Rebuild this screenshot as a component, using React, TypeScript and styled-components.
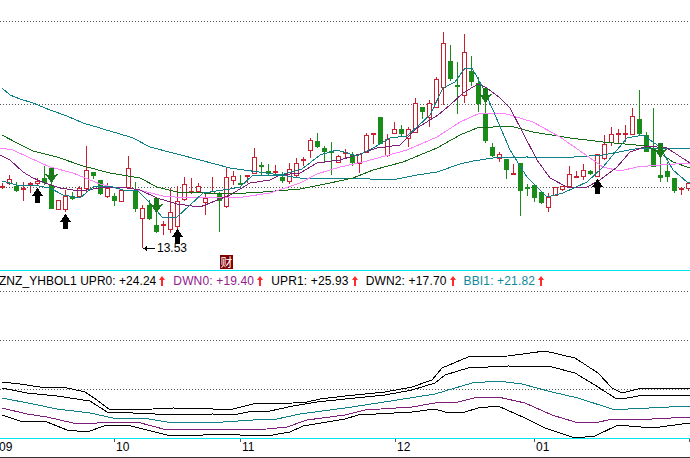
import React from "react";
import styled, { createGlobalStyle } from "styled-components";

type Candle = [number, number, number, number, number];

// wick top, body top, body bottom, wick bottom, kind (0 hollow red, 1 green, 2 solid red)
const candles: Candle[] = [
  [183, 186, 187, 189, 2], [175, 179, 183, 185, 0], [182, 186, 191, 192, 1], [182, 188, 189, 201, 2],
  [182, 183, 185, 193, 2], [178, 181, 183, 185, 0], [166, 178, 183, 185, 1], [178, 185, 209, 209, 1],
  [200, 200, 209, 209, 0], [190, 196, 209, 212, 0], [192, 196, 199, 200, 1], [186, 188, 196, 198, 0],
  [146, 170, 188, 192, 0], [172, 172, 176, 179, 1], [180, 180, 194, 195, 1], [183, 188, 196, 198, 0],
  [193, 196, 201, 206, 1], [190, 190, 201, 201, 0], [156, 168, 187, 188, 0], [182, 190, 209, 212, 1],
  [205, 208, 218, 248, 0], [200, 205, 219, 220, 1], [200, 225, 232, 233, 1], [221, 224, 225, 235, 2],
  [188, 212, 229, 233, 0], [186, 201, 226, 230, 0], [177, 184, 199, 201, 0], [178, 191, 192, 194, 2],
  [183, 186, 191, 193, 0], [193, 198, 202, 215, 0], [177, 191, 193, 194, 0], [192, 193, 201, 232, 1],
  [168, 177, 206, 208, 0], [171, 176, 180, 185, 0], [175, 183, 184, 185, 1], [175, 175, 176, 183, 2],
  [148, 157, 173, 174, 0], [162, 165, 166, 175, 1], [164, 171, 174, 175, 1], [165, 171, 172, 175, 2],
  [172, 177, 181, 183, 1], [163, 169, 181, 184, 0], [158, 163, 175, 177, 0], [157, 159, 160, 166, 2],
  [138, 140, 150, 158, 0], [133, 141, 147, 148, 1], [146, 148, 152, 162, 1], [142, 151, 153, 175, 1],
  [155, 156, 162, 163, 0], [149, 152, 153, 158, 2], [152, 155, 163, 166, 1], [154, 154, 163, 173, 0],
  [133, 135, 152, 153, 0], [133, 133, 135, 144, 2], [117, 117, 144, 144, 1], [134, 139, 155, 157, 0],
  [122, 129, 133, 133, 0], [125, 129, 134, 137, 1], [127, 129, 138, 147, 0], [98, 103, 132, 133, 0],
  [107, 107, 112, 119, 1], [100, 103, 117, 127, 0], [77, 79, 107, 108, 0], [32, 43, 87, 105, 0],
  [45, 61, 79, 81, 1], [62, 85, 86, 114, 1], [34, 52, 95, 103, 0], [56, 71, 82, 86, 1],
  [77, 83, 104, 112, 1], [88, 113, 141, 143, 1], [143, 147, 156, 157, 1], [152, 154, 158, 162, 0],
  [159, 159, 170, 179, 1], [164, 173, 174, 174, 2], [163, 163, 191, 216, 1], [184, 187, 189, 196, 1],
  [185, 185, 198, 202, 1], [192, 192, 203, 204, 1], [193, 197, 207, 212, 0], [187, 187, 195, 195, 0],
  [186, 186, 189, 191, 0], [166, 174, 186, 188, 0], [171, 176, 178, 178, 2], [164, 170, 176, 180, 0],
  [170, 171, 174, 175, 1], [154, 154, 176, 177, 0], [135, 144, 158, 160, 0], [127, 134, 142, 146, 0],
  [129, 133, 134, 143, 2], [125, 133, 134, 142, 2], [108, 116, 134, 135, 0], [90, 119, 134, 135, 1],
  [132, 135, 152, 152, 1], [108, 149, 167, 167, 1], [143, 175, 178, 182, 1], [162, 171, 177, 182, 1],
  [178, 178, 191, 193, 1], [187, 188, 189, 195, 2], [182, 183, 188, 191, 0],
];

const priceLines = [
  {
    color: "#0e8088",
    points:
      "2,88 10,95 20,99 33,103 50,110 67,116 83,123 100,128 106,130 117,133 133,138 150,147 200,160 230,168 280,175 300,178 347,178 370,179 397,179 417,175 437,172 460,164 473,161 493,158 527,157 560,158 603,155 640,148 690,148",
  },
  {
    color: "#156b15",
    points:
      "2,135 17,143 33,151 57,157 83,166 110,173 140,178 157,187 177,192 230,194 263,192 300,189 330,183 353,178 373,170 403,162 437,148 460,135 477,128 510,126 533,132 570,138 603,142 647,146 660,153 673,162 690,168",
  },
  {
    color: "#ff80ff",
    points:
      "0,148 13,150 30,158 50,167 73,173 100,184 123,190 143,191 163,196 187,198 213,197 230,198 243,197 270,193 300,183 317,174 340,167 363,162 407,150 437,137 460,122 480,113 503,113 533,122 560,137 583,153 603,167 620,171 637,167 660,165 690,163",
  },
  {
    color: "#7d1e78",
    points:
      "0,155 10,160 23,172 33,178 45,183 60,188 80,191 107,187 127,188 140,190 157,198 177,204 200,207 230,195 250,183 270,180 280,175 300,173 317,163 340,160 363,153 377,148 400,145 417,128 438,115 450,105 463,93 478,84 487,88 500,98 510,108 523,133 537,160 550,178 567,187 587,187 600,180 617,167 630,152 647,146 667,148 690,163",
  },
  {
    color: "#0e8088",
    points:
      "2,181 17,185 33,185 50,188 63,195 80,198 93,187 110,186 123,190 137,190 150,203 163,218 177,217 190,205 203,193 230,189 240,187 253,175 280,175 302,169 320,155 337,150 357,156 373,148 390,138 407,136 430,115 443,88 455,82 465,68 472,68 483,88 493,110 510,150 527,177 547,197 563,193 587,182 603,167 627,138 643,135 660,147 673,170 687,182 690,183",
  },
];

const bandLines = [
  {
    color: "#000000",
    points:
      "2,382 20,384 40,387 63,387 85,392 97,400 110,410 153,409 173,408 213,409 233,409 253,404 293,403 307,402 320,399 345,396 385,392 412,387 432,380 442,368 468,357 508,356 545,351 575,358 598,373 612,388 622,393 638,389 690,388",
  },
  {
    color: "#000000",
    points:
      "2,388 27,393 57,396 90,401 107,412 133,413 177,415 213,414 233,415 253,411 270,411 293,406 317,402 345,399 385,395 412,390 435,383 445,375 468,368 508,366 552,367 575,373 598,387 615,398 622,399 638,396 690,395",
  },
  {
    color: "#0e8088",
    points:
      "2,398 33,404 57,409 90,413 113,418 143,418 167,422 200,422 223,422 253,420 277,419 300,414 345,408 378,403 435,394 472,383 498,381 522,384 552,392 578,398 612,409 628,409 690,406",
  },
  {
    color: "#7d1e78",
    points:
      "2,408 27,414 47,417 73,423 87,424 107,422 137,422 167,430 267,429 287,427 307,420 345,415 365,410 412,407 435,403 458,402 478,397 498,397 525,403 552,415 575,422 595,423 612,419 652,419 690,417",
  },
  {
    color: "#000000",
    points:
      "2,415 20,421 47,422 67,430 87,432 107,425 127,425 167,435 193,436 213,434 267,436 290,432 303,426 345,419 358,415 412,412 435,409 445,412 465,412 478,408 498,406 525,418 545,428 575,438 595,436 618,425 652,428 690,423",
  },
];

const buySignals = [
  { x: 37, y: 188 },
  { x: 65, y: 214 },
  { x: 177, y: 229 },
  { x: 597, y: 179 },
];

const sellSignals = [
  { x: 51, y: 168 },
  { x: 156, y: 198 },
  { x: 485, y: 88 },
  { x: 660, y: 143 },
];

const legendItems = [
  { label: "ZNZ_YHBOL1 UPR0: +24.24", color: "#000000", spacing: 0.04 },
  { label: "DWN0: +19.40", color: "#93208d", spacing: 0.15 },
  { label: "UPR1: +25.93", color: "#000000", spacing: 0.15 },
  { label: "DWN2: +17.70", color: "#000000", spacing: 0.15 },
  { label: "BBI1: +21.82", color: "#10879a", spacing: 0.15 },
];

const axisMarks = [
  { label: "09", x: -3 },
  { label: "10", x: 114 },
  { label: "11", x: 240 },
  { label: "12", x: 395 },
  { label: "01", x: 534 },
  { label: "02", x: 689 },
];

const RED = "#c8202f";
const GREEN = "#1a8c1a";

const GlobalStyle = createGlobalStyle`
  html, body {
    margin: 0;
    padding: 0;
    background: #ffffff;
  }
`;

const Page = styled.div`
  width: 690px;
  height: 458px;
  overflow: hidden;
  display: flex;
  flex-direction: column;
  background: #ffffff;
  font-family: "Liberation Sans", Arial, sans-serif;
  font-size: 12px;
  color: #000000;
`;

const PricePane = styled.div`
  position: relative;
  height: 270px;
  flex: none;
`;

const PaneSvg = styled.svg`
  display: block;
  flex: none;
`;

const GridLine = styled.line`
  stroke: #555555;
  stroke-width: 1;
  stroke-dasharray: 1 2;
`;

const Trace = styled.polyline<{ $color: string }>`
  fill: none;
  stroke: ${({ $color }) => $color};
  stroke-width: 1;
`;

const LowLabel = styled.span`
  position: absolute;
  left: 157px;
  top: 241px;
  line-height: 14px;
  color: #000000;
`;

const EventBadge = styled.span`
  position: absolute;
  left: 220px;
  top: 255px;
  width: 13px;
  height: 14px;
  display: flex;
  align-items: center;
  justify-content: center;
  background: #800000;
  color: #ffffff;
  font-family: "Noto Sans CJK SC", sans-serif;
  font-size: 12px;
  line-height: 14px;
`;

const CyanRule = styled.div`
  height: 1px;
  flex: none;
  background: #00e6f0;
`;

const Legend = styled.div`
  height: 20px;
  flex: none;
  display: flex;
  align-items: center;
  gap: 8px;
  margin-left: -1px;
  white-space: nowrap;
`;

const LegendItem = styled.span<{ $color: string; $spacing: number }>`
  display: flex;
  align-items: center;
  gap: 3px;
  color: ${({ $color }) => $color};
  letter-spacing: ${({ $spacing }) => $spacing}px;
`;

const TrendArrow = styled.svg`
  display: block;
  width: 6px;
  height: 10px;
  fill: #ff2a2a;
`;

const Axis = styled.div`
  position: relative;
  height: 18px;
  flex: none;
  border-bottom: 1px solid #333333;
`;

const AxisMark = styled.span<{ $x: number }>`
  position: absolute;
  left: ${({ $x }) => $x}px;
  top: 0;
  height: 18px;
  display: flex;
  gap: 1px;
`;

const AxisTick = styled.i`
  display: block;
  width: 1px;
  height: 3px;
  background: #555555;
`;

const AxisText = styled.span`
  line-height: 16px;
`;

const CandleShape = ({ candle, index }: { candle: Candle; index: number }) => {
  const [wickTop, bodyTop, bodyBottom, wickBottom, kind] = candle;
  const x = 2 + 7 * index;
  const color = kind === 1 ? GREEN : RED;
  return (
    <g>
      <rect x={x} y={wickTop} width={1} height={wickBottom - wickTop} fill={color} />
      {kind === 0 ? (
        <rect
          x={x - 1.5}
          y={bodyTop + 0.5}
          width={4}
          height={bodyBottom - bodyTop}
          fill="#ffffff"
          stroke={color}
        />
      ) : (
        <rect x={x - 2} y={bodyTop} width={5} height={Math.max(bodyBottom - bodyTop, 2)} fill={color} />
      )}
    </g>
  );
};

const UpSignal = ({ x, y }: { x: number; y: number }) => (
  <path
    d={`M${x + 0.5} ${y}L${x + 6} ${y + 8}H${x + 3}V${y + 15}H${x - 2}V${y + 8}H${x - 5}Z`}
    fill="#000000"
  />
);

const DownSignal = ({ x, y }: { x: number; y: number }) => (
  <path
    d={`M${x + 0.5} ${y + 15}L${x + 7} ${y + 6}L${x + 3} ${y + 7}V${y}H${x - 2}V${y + 7}L${x - 6} ${y + 6}Z`}
    fill="#1a7a1a"
  />
);

const App = () => {
  return (
    <Page>
      <GlobalStyle />
      <PricePane>
        <PaneSvg width={690} height={270} viewBox="0 0 690 270" shapeRendering="crispEdges">
          {[21, 104, 187].map((y) => (
            <GridLine key={y} x1={0} x2={690} y1={y + 0.5} y2={y + 0.5} />
          ))}
          {candles.map((candle, index) => (
            <CandleShape key={index} candle={candle} index={index} />
          ))}
          {priceLines.map((line, index) => (
            <Trace key={index} $color={line.color} points={line.points} />
          ))}
          {buySignals.map((s) => (
            <UpSignal key={s.x} x={s.x} y={s.y} />
          ))}
          {sellSignals.map((s) => (
            <DownSignal key={s.x} x={s.x} y={s.y} />
          ))}
          <rect x={143} y={248} width={12} height={1} fill="#000000" />
          <path d="M143 248.5L147 246V251Z" fill="#000000" />
        </PaneSvg>
        <LowLabel>13.53</LowLabel>
        <EventBadge>财</EventBadge>
      </PricePane>
      <CyanRule />
      <Legend>
        {legendItems.map((item) => (
          <LegendItem key={item.label} $color={item.color} $spacing={item.spacing}>
            {item.label}
            <TrendArrow viewBox="0 0 6 10">
              <path d="M3 0L6 4H4V10H2V4H0Z" />
            </TrendArrow>
          </LegendItem>
        ))}
      </Legend>
      <PaneSvg width={690} height={147} viewBox="0 291 690 147" shapeRendering="crispEdges">
        {[291, 340, 389].map((y) => (
          <GridLine key={y} x1={0} x2={690} y1={y + 0.5} y2={y + 0.5} />
        ))}
        {bandLines.map((line, index) => (
          <Trace key={index} $color={line.color} points={line.points} />
        ))}
      </PaneSvg>
      <CyanRule />
      <Axis>
        {axisMarks.map((mark) => (
          <AxisMark key={mark.label} $x={mark.x}>
            <AxisTick />
            <AxisText>{mark.label}</AxisText>
          </AxisMark>
        ))}
      </Axis>
    </Page>
  );
};

export default App;
